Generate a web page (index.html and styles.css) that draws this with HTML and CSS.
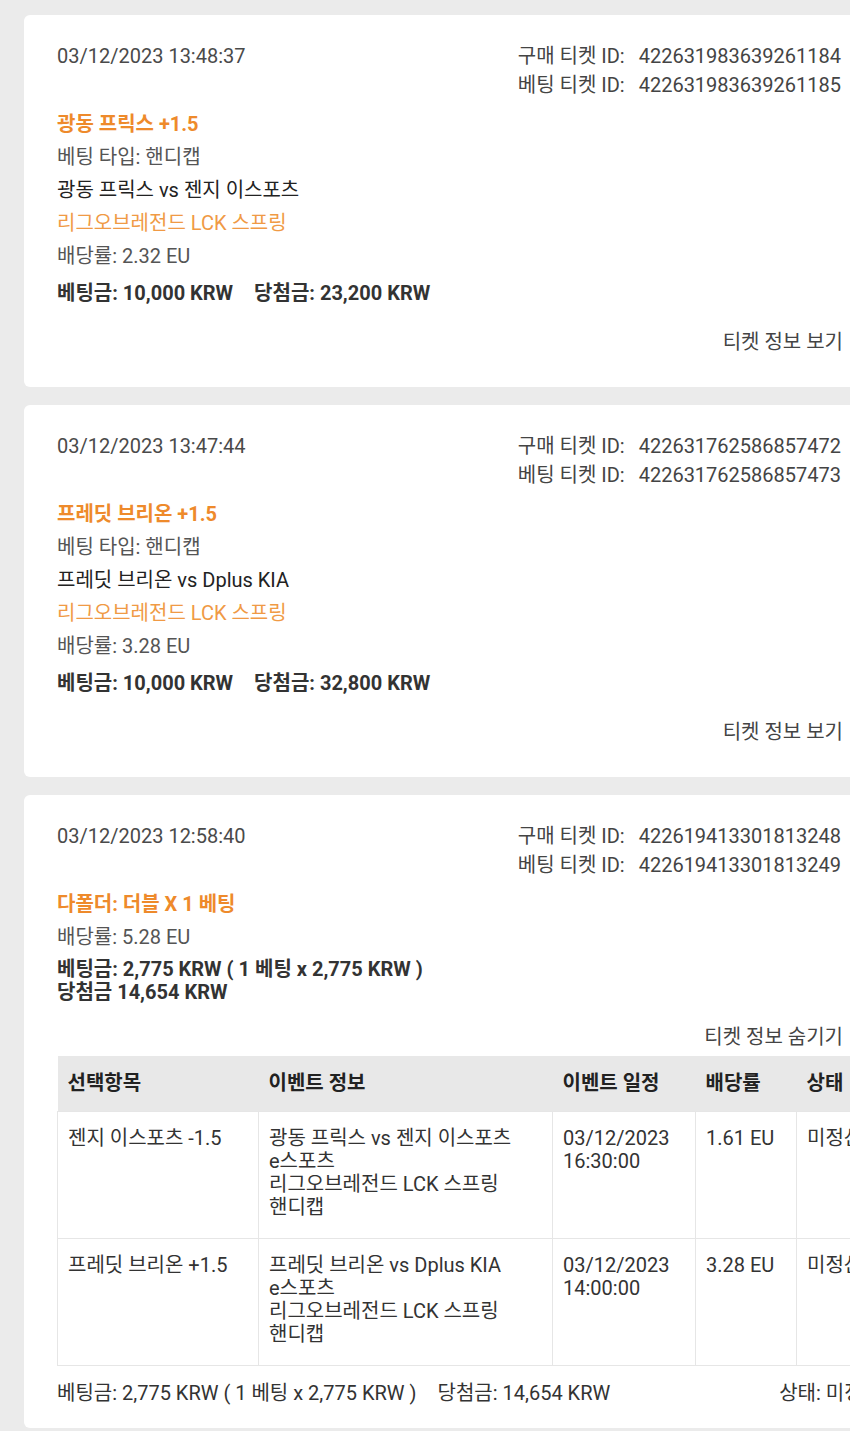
FILE: index.html
```html
<!DOCTYPE html>
<html lang="ko">
<head>
    <meta charset="UTF-8">
    <meta name="viewport" content="width=device-width, initial-scale=1.0">
    <title>베팅 내역</title>
    <link rel="stylesheet" href="styles.css">
</head>
<body>
    <div class="list">
        <div class="card">
            <div class="head">
                <div class="date">03/12/2023 13:48:37</div>
                <div class="ids">
                    <span>구매 티켓 ID:</span><span>422631983639261184</span>
                    <span>베팅 티켓 ID:</span><span>422631983639261185</span>
                </div>
            </div>
            <div class="title">광동 프릭스 +1.5</div>
            <div class="line muted">베팅 타입: 핸디캡</div>
            <div class="line dark">광동 프릭스 vs 젠지 이스포츠</div>
            <div class="line league">리그오브레전드 LCK 스프링</div>
            <div class="line muted">배당률: 2.32 EU</div>
            <div class="stake"><span>베팅금: 10,000 KRW</span><span>당첨금: 23,200 KRW</span></div>
            <div class="link">티켓 정보 보기</div>
        </div>

        <div class="card">
            <div class="head">
                <div class="date">03/12/2023 13:47:44</div>
                <div class="ids">
                    <span>구매 티켓 ID:</span><span>422631762586857472</span>
                    <span>베팅 티켓 ID:</span><span>422631762586857473</span>
                </div>
            </div>
            <div class="title">프레딧 브리온 +1.5</div>
            <div class="line muted">베팅 타입: 핸디캡</div>
            <div class="line dark">프레딧 브리온 vs Dplus KIA</div>
            <div class="line league">리그오브레전드 LCK 스프링</div>
            <div class="line muted">배당률: 3.28 EU</div>
            <div class="stake"><span>베팅금: 10,000 KRW</span><span>당첨금: 32,800 KRW</span></div>
            <div class="link">티켓 정보 보기</div>
        </div>

        <div class="card card-open">
            <div class="head">
                <div class="date">03/12/2023 12:58:40</div>
                <div class="ids">
                    <span>구매 티켓 ID:</span><span>422619413301813248</span>
                    <span>베팅 티켓 ID:</span><span>422619413301813249</span>
                </div>
            </div>
            <div class="title">다폴더: 더블 X 1 베팅</div>
            <div class="line muted">배당률: 5.28 EU</div>
            <div class="stake stake-multi">
                <div>베팅금: 2,775 KRW ( 1 베팅 x 2,775 KRW )</div>
                <div>당첨금 14,654 KRW</div>
            </div>
            <div class="link link-close">티켓 정보 숨기기</div>

            <div class="detail">
                <table class="picks">
                    <thead>
                        <tr>
                            <th class="c1">선택항목</th>
                            <th class="c2">이벤트 정보</th>
                            <th class="c3">이벤트 일정</th>
                            <th class="c4">배당률</th>
                            <th class="c5">상태</th>
                        </tr>
                    </thead>
                    <tbody>
                        <tr>
                            <td>젠지 이스포츠 -1.5</td>
                            <td>광동 프릭스 vs 젠지 이스포츠<br>e스포츠<br>리그오브레전드 LCK 스프링<br>핸디캡</td>
                            <td>03/12/2023<br>16:30:00</td>
                            <td>1.61 EU</td>
                            <td>미정산</td>
                        </tr>
                        <tr>
                            <td>프레딧 브리온 +1.5</td>
                            <td>프레딧 브리온 vs Dplus KIA<br>e스포츠<br>리그오브레전드 LCK 스프링<br>핸디캡</td>
                            <td>03/12/2023<br>14:00:00</td>
                            <td>3.28 EU</td>
                            <td>미정산</td>
                        </tr>
                    </tbody>
                </table>
                <div class="summary">
                    <span>베팅금: 2,775 KRW ( 1 베팅 x 2,775 KRW )</span>
                    <span>당첨금: 14,654 KRW</span>
                    <span class="summary-state">상태: 미정산</span>
                </div>
            </div>
        </div>
    </div>
</body>
</html>
```

FILE: styles.css
```css
html, body {
    overflow: hidden;
}
body {
    margin: 0;
    background: #ebebeb;
    font-family: Roboto, "Noto Sans CJK KR", sans-serif;
    font-size: 20px;
    line-height: 29px;
    color: #444;
}
.list {
    padding-top: 15px;
}
.card {
    box-sizing: border-box;
    width: 852px;
    margin: 0 0 18px 24px;
    padding: 27px 33px 30px;
    background: #fff;
    border-radius: 6px;
}
.head {
    display: flex;
    justify-content: space-between;
}
.date {
    color: #4a4a4a;
}
.ids {
    display: grid;
    grid-template-columns: auto auto;
    column-gap: 14px;
    margin-right: 2px;
    color: #444;
}
.title {
    margin-top: 10px;
    color: #ee8a2b;
    font-weight: bold;
}
.line {
    margin-top: 4px;
}
.muted {
    color: #555;
}
.dark {
    color: #222;
}
.league {
    color: #f09a45;
}
.stake {
    display: flex;
    gap: 21px;
    margin-top: 8px;
    color: #333;
    font-weight: bold;
}
.stake-multi {
    flex-direction: column;
    gap: 0;
    margin-top: 6px;
    line-height: 23px;
}
.link {
    margin-top: 20px;
    text-align: right;
    color: #444;
}
.link-close {
    margin-top: 19px;
}
.card-open {
    padding-bottom: 20px;
}
.detail {
    width: 840px;
    margin-top: 4px;
}
.picks {
    width: 100%;
    border-collapse: collapse;
    table-layout: fixed;
}
.picks th {
    box-sizing: border-box;
    height: 55px;
    padding: 0 10px;
    background: #e8e8e8;
    text-align: left;
    font-weight: bold;
    color: #222;
}
.picks td {
    box-sizing: border-box;
    height: 125px;
    padding: 15px 10px 19px;
    vertical-align: top;
    line-height: 23px;
    color: #333;
    border: 1px solid #e6e6e6;
}
.c1 { width: 201px; }
.c2 { width: 294px; }
.c3 { width: 143px; }
.c4 { width: 101px; }
.summary {
    display: flex;
    gap: 21px;
    margin-top: 13px;
    color: #333;
}
.summary-state {
    margin-left: auto;
    padding-right: 16px;
}
```
